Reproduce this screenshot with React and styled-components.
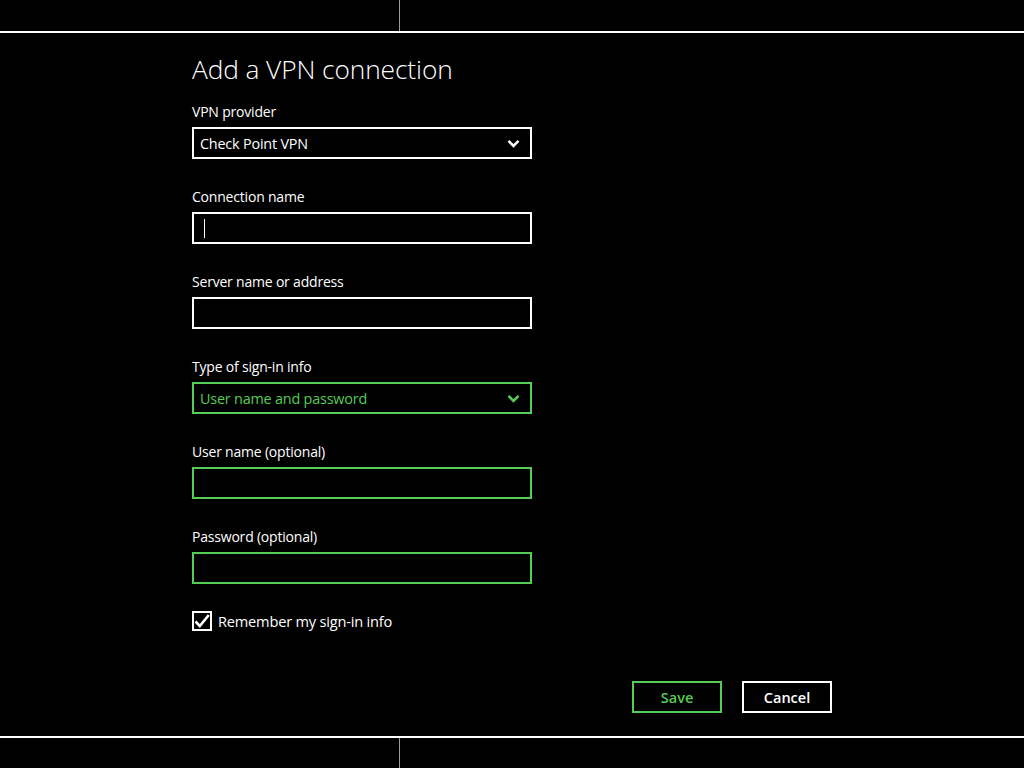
import React from "react";
import styled, { createGlobalStyle } from "styled-components";

const GlobalStyle = createGlobalStyle`
  html, body {
    margin: 0;
    padding: 0;
    background: #000;
  }
  body {
    font-family: "Open Sans", "Noto Sans", sans-serif;
    color: #fff;
  }
`;

const green = "#55cc55";

const Screen = styled.div`
  width: 1024px;
  height: 768px;
  background: #000;
  display: flex;
  flex-direction: column;
  overflow: hidden;
`;

const Edge = styled.div`
  height: ${(p) => p.$h}px;
  display: flex;
  justify-content: flex-start;
  padding-left: 399px;
`;

const Divider = styled.div`
  width: 1px;
  background: #9a9a9a;
`;

const Rule = styled.div`
  height: 2px;
  background: #fff;
`;

const Main = styled.main`
  flex: 1;
  padding: 21px 0 0 192px;
`;

const Form = styled.div`
  width: 640px;
  display: flex;
  flex-direction: column;
`;

const Title = styled.h1`
  margin: 0 0 18px;
  font-size: 26.3px;
  font-weight: 300;
  line-height: 30px;
  letter-spacing: -0.1px;
`;

const Field = styled.div`
  display: flex;
  flex-direction: column;
  margin-bottom: 28px;
`;

const Label = styled.label`
  font-size: 14px;
  line-height: 20px;
  margin-bottom: 5px;
  letter-spacing: -0.2px;
`;

const Box = styled.div`
  box-sizing: border-box;
  width: 340px;
  height: 32px;
  border: 2px solid ${(p) => (p.$accent ? green : "#fff")};
  display: flex;
  align-items: center;
  justify-content: space-between;
  padding: 0 10px 0 6px;
  font-size: 14.4px;
  letter-spacing: -0.2px;
  color: ${(p) => (p.$accent ? green : "#fff")};
`;

const Caret = styled.span`
  width: 1px;
  height: 19px;
  margin-left: 4px;
  background: #fff;
`;

const CheckRow = styled.div`
  display: flex;
  align-items: center;
  gap: 6px;
  font-size: 14.6px;
  letter-spacing: -0.2px;
  margin-top: -1px;
`;

const CheckBox = styled.span`
  box-sizing: border-box;
  width: 20px;
  height: 20px;
  border: 2px solid #fff;
  display: flex;
  align-items: center;
  justify-content: center;
`;

const Actions = styled.div`
  display: flex;
  justify-content: flex-end;
  gap: 20px;
  margin-top: 50px;
`;

const Button = styled.button`
  box-sizing: border-box;
  width: 90px;
  height: 32px;
  background: #000;
  border: 2px solid ${(p) => (p.$primary ? green : "#fff")};
  color: ${(p) => (p.$primary ? green : "#fff")};
  font-family: "Open Sans", "Noto Sans", sans-serif;
  font-size: 14.5px;
  font-weight: 600;
  padding: 0;
`;

const Chevron = ({ color }) => (
  <svg width="13" height="9" viewBox="0 0 13 9">
    <path
      d="M1.5 1.8 L6.5 6.8 L11.5 1.8"
      fill="none"
      stroke={color}
      strokeWidth="2.6"
    />
  </svg>
);

const Check = () => (
  <svg width="16" height="16" viewBox="0 0 16 16">
    <path
      d="M1.5 8.5 L5.8 13 L14.8 2"
      fill="none"
      stroke="#fff"
      strokeWidth="2.6"
    />
  </svg>
);

const fields = [
  { label: "VPN provider", value: "Check Point VPN", select: true },
  { label: "Connection name", caret: true },
  { label: "Server name or address" },
  { label: "Type of sign-in info", value: "User name and password", select: true, accent: true },
  { label: "User name (optional)", accent: true },
  { label: "Password (optional)", accent: true },
];

const App = () => {
  return (
    <Screen>
      <GlobalStyle />
      <Edge $h={31}>
        <Divider />
      </Edge>
      <Rule />
      <Main>
        <Form>
          <Title>Add a VPN connection</Title>
          {fields.map((f) => (
            <Field key={f.label}>
              <Label>{f.label}</Label>
              <Box $accent={f.accent}>
                {f.caret ? <Caret /> : <span>{f.value}</span>}
                {f.select && <Chevron color={f.accent ? green : "#fff"} />}
              </Box>
            </Field>
          ))}
          <CheckRow>
            <CheckBox>
              <Check />
            </CheckBox>
            Remember my sign-in info
          </CheckRow>
          <Actions>
            <Button $primary>Save</Button>
            <Button>Cancel</Button>
          </Actions>
        </Form>
      </Main>
      <Rule />
      <Edge $h={30}>
        <Divider />
      </Edge>
    </Screen>
  );
};

export default App;
